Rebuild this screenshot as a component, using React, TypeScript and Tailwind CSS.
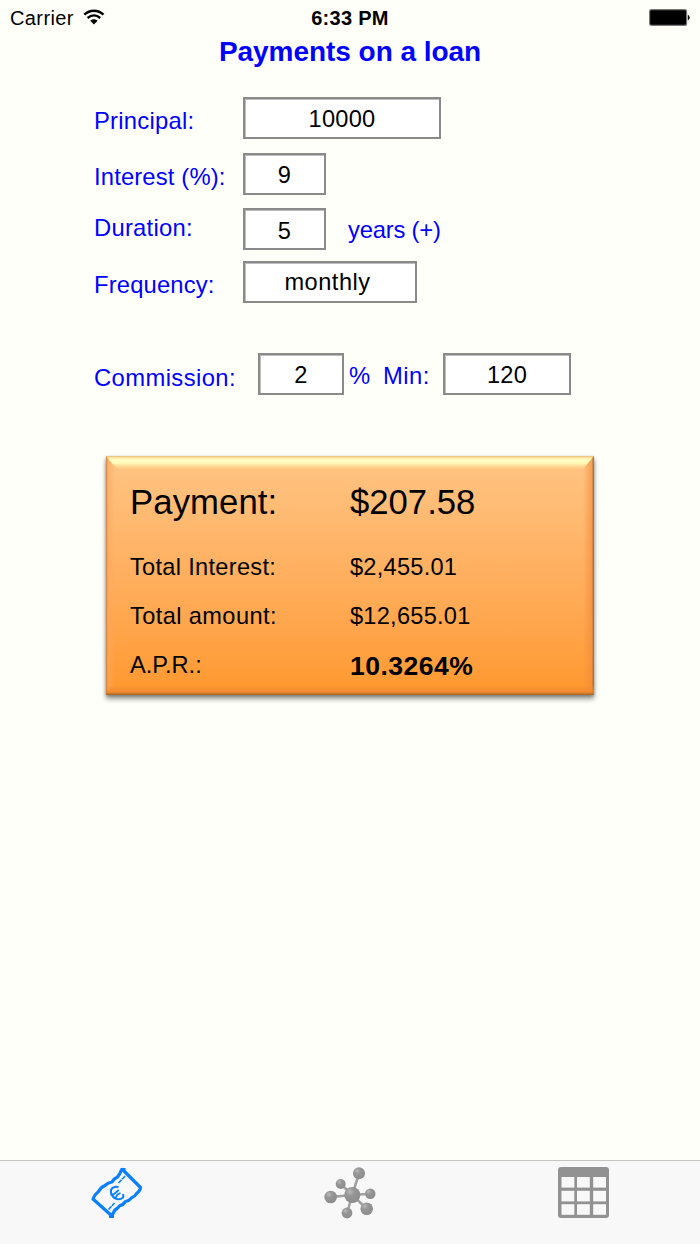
import { useState } from "react";
import clsx from "clsx";

type FieldProps = {
  label: string;
  value: string;
  onChange: (value: string) => void;
  className?: string;
};

function Field({ label, value, onChange, className }: FieldProps) {
  return (
    <input
      aria-label={label}
      value={value}
      onChange={(e) => onChange(e.target.value)}
      className={clsx(
        "block h-[42px] shrink-0 border-2 border-[#8a8a8a] bg-white text-center text-[23.6px] leading-[24px] text-black shadow-[inset_1px_1px_0_#bdbdbd] outline-none",
        className
      )}
    />
  );
}

function StatusBar() {
  return (
    <div className="grid h-[36px] grid-cols-3 items-center pr-[10px] pl-[10px] text-black">
      <div className="flex items-center gap-[9px]">
        <span className="text-[20px] leading-[36px] tracking-[0.4px]">Carrier</span>
        <svg width="22" height="16" viewBox="0 0 22 16" className="-mt-[2px]" fill="none" stroke="#000">
          <path d="M1.3 5.6 C6.8 0.4 15 0.4 20.5 5.6" strokeWidth="2.5" />
          <path d="M4.6 9 C8.4 5.6 13.4 5.6 17.2 9" strokeWidth="2.4" />
          <path d="M7.2 11.8 C9.4 9.8 12.4 9.8 14.6 11.8 L10.9 15.6 Z" fill="#000" stroke="none" />
        </svg>
      </div>
      <span className="text-center text-[20px] leading-[36px] font-bold tracking-[0.3px]">6:33 PM</span>
      <div className="flex items-center justify-end">
        <svg width="41" height="17" viewBox="0 0 41 17" className="-mt-[2px]">
          <rect x="0.6" y="0.6" width="37" height="15.8" rx="2" fill="#000" stroke="#777" strokeWidth="1.2" />
          <path d="M38.8 5.8 C41.3 6.8 41.3 10.2 38.8 11.2 Z" fill="#000" />
        </svg>
      </div>
    </div>
  );
}

function ResultCard() {
  return (
    <section className="relative mt-[61px] ml-[106px] h-[239px] w-[488px] bg-linear-to-b from-[#ffc584] to-[#ff982c] pt-[28px] pl-[24px] text-black shadow-[0_4px_5px_rgba(0,0,0,0.4),0_1px_3px_rgba(0,0,0,0.25)]">
      {/* bevelled edges */}
      <div className="absolute inset-y-0 left-0 w-[9px] bg-linear-to-r from-[#c77a3d] via-[#f9a862]/60 via-20% to-transparent" />
      <div className="absolute inset-y-0 right-0 w-[11px] bg-linear-to-l from-[#a8662f] via-[#f0893a]/60 via-22% to-transparent" />
      <div className="absolute inset-x-0 bottom-0 h-[10px] bg-linear-to-t from-[#a86224] via-[#ee8832]/80 via-30% to-transparent" />
      <div className="absolute inset-x-0 top-0 h-[13px] bg-[linear-gradient(to_bottom,#eab878_0,#ffeda6_2px,#ffffc4_4px,#fffbb8_7px,#ffdc98_10px,#ffc482_13px)] [clip-path:polygon(0_0,100%_0,calc(100%-11px)_100%,11px_100%)]" />

      <div className="relative flex text-[34.7px] leading-[36px]">
        <span className="w-[220px] tracking-[0.1px]">Payment:</span>
        <span>$207.58</span>
      </div>
      <div className="relative mt-[35px] flex text-[23.6px] leading-[24px] tracking-[0.25px]">
        <span className="w-[220px] tracking-[0.3px]">Total Interest:</span>
        <span>$2,455.01</span>
      </div>
      <div className="relative mt-[25px] flex text-[23.6px] leading-[24px] tracking-[0.25px]">
        <span className="w-[220px] tracking-[0.4px]">Total amount:</span>
        <span>$12,655.01</span>
      </div>
      <div className="relative mt-[25px] flex text-[23.6px] leading-[24px]">
        <span className="w-[220px]">A.P.R.:</span>
        <span className="text-[26.5px] leading-[26px] font-bold tracking-[0.5px]">10.3264%</span>
      </div>
    </section>
  );
}

function MoneyIcon() {
  return (
    <svg width="52" height="52" viewBox="0 0 52 52" fill="none" stroke="#0a7fff" strokeLinejoin="round">
      <path
        d="M31.5 2.5 L49.5 20.5 Q49 24 46 26 Q44 29.5 41 30.5 Q38 34 34.5 34.5 Q32 38 29 38.5 Q26 42 24 43 Q22 46 21 49 L2 32 Q4 27 7.5 24.5 Q10 20 14 18.5 Q17 15.5 21 15 Q23 11.5 26.5 10 Q29 7 30 4 Z"
        strokeWidth="3.2"
      />
      <path d="M29.5 3 h5 M18 49 h5" strokeWidth="4" />
      <path d="M27.5 16 l3 -3.2 M31 12.3 l3.2 -3.3 M17.5 42.5 l3 -3.2 M21 38.8 l2.5 -2.8" strokeWidth="1.6" />
      <path d="M27.5 20.3 C24 18.8 19 21 20 25.5 C21 31 27 34.5 32.2 30.5 V27" strokeWidth="2" />
      <path d="M19.5 27.3 L22.5 27.5 L27.8 23 M24.5 31 L26.5 27.5 L29.5 26" strokeWidth="1.7" />
    </svg>
  );
}

const nodes = [
  { x: 35, y: 7.3, r: 6 },
  { x: 16.7, y: 18, r: 5 },
  { x: 6.7, y: 31, r: 6.3 },
  { x: 46.3, y: 27.7, r: 5.2 },
  { x: 42.7, y: 42.7, r: 6.3 },
  { x: 23, y: 47, r: 5.4 },
];

function NetworkIcon() {
  return (
    <svg width="52" height="54" viewBox="0 0 52 54" className="-mt-[1px]">
      <defs>
        <radialGradient id="ball" cx="0.35" cy="0.3" r="0.7">
          <stop offset="0" stopColor="#b8b8b8" />
          <stop offset="0.4" stopColor="#959595" />
          <stop offset="1" stopColor="#8d8d8d" />
        </radialGradient>
      </defs>
      {nodes.map((n) => (
        <line key={n.x} x1="28.3" y1="29" x2={n.x} y2={n.y} stroke="#a0a0a0" strokeWidth="2.6" />
      ))}
      {nodes.map((n) => (
        <circle key={n.x} cx={n.x} cy={n.y} r={n.r} fill="url(#ball)" />
      ))}
      <circle cx="28.3" cy="29" r="8" fill="url(#ball)" />
    </svg>
  );
}

function TableIcon() {
  return (
    <svg width="51" height="51" viewBox="0 0 51 51">
      <rect width="51" height="51" rx="3" fill="#929292" />
      {[10, 23.8, 37.2].map((y) =>
        [3.5, 19, 35.2].map((x) => (
          <rect key={`${x}-${y}`} x={x} y={y} width="12.8" height="10.6" fill="#f8f8f8" />
        ))
      )}
    </svg>
  );
}

export default function App() {
  const [principal, setPrincipal] = useState("10000");
  const [interest, setInterest] = useState("9");
  const [duration, setDuration] = useState("5");
  const [frequency, setFrequency] = useState("monthly");
  const [commission, setCommission] = useState("2");
  const [minimum, setMinimum] = useState("120");

  return (
    <div className="flex h-[1244px] w-[700px] flex-col overflow-hidden bg-[#fffffa] font-['Liberation_Sans',Arial,sans-serif]">
      <StatusBar />
      <h1 className="h-[32px] text-center text-[28px] leading-[32px] font-bold tracking-[-0.05px] text-[#0000ff]">
        Payments on a loan
      </h1>

      <main className="flex-1">
        <div className="pt-[29px] pl-[94px] text-[23.8px] leading-[24px] tracking-[0.25px] text-[#0000ff]">
          <div className="flex h-[56px] items-start">
            <span className="w-[149px] pt-[12px]">Principal:</span>
            <Field label="Principal" value={principal} onChange={setPrincipal} className="w-[198px] pt-[2px]" />
          </div>
          <div className="flex h-[55px] items-start">
            <span className="w-[149px] pt-[12px] tracking-[0.15px]">Interest (%):</span>
            <Field label="Interest" value={interest} onChange={setInterest} className="w-[83px] pt-[2px]" />
          </div>
          <div className="flex h-[53px] items-start">
            <span className="w-[149px] pt-[8px]">Duration:</span>
            <Field label="Duration" value={duration} onChange={setDuration} className="w-[83px] pt-[4px]" />
            <span className="pt-[10px] pl-[22px] tracking-[-0.2px]">years (+)</span>
          </div>
          <div className="flex h-[92px] items-start">
            <span className="w-[149px] pt-[12px] tracking-[0.15px]">Frequency:</span>
            <Field label="Frequency" value={frequency} onChange={setFrequency} className="w-[174px] pr-[5px] tracking-[0.5px]" />
          </div>
          <div className="flex items-start">
            <span className="w-[164px] pt-[13px] tracking-[0.4px]">Commission:</span>
            <Field label="Commission" value={commission} onChange={setCommission} className="w-[86px] pt-[3px]" />
            <span className="w-[39px] pt-[11px] pl-[5px]">%</span>
            <span className="w-[60px] pt-[11px] tracking-[0.5px]">Min:</span>
            <Field label="Minimum commission" value={minimum} onChange={setMinimum} className="w-[128px] pt-[3px]" />
          </div>
        </div>

        <ResultCard />
      </main>

      <nav className="grid h-[84px] grid-cols-3 items-start justify-items-center border-t border-[#c4c4c0] bg-[#f8f8f8] pt-[6px]">
        <button aria-label="Loan">
          <MoneyIcon />
        </button>
        <button aria-label="Network">
          <NetworkIcon />
        </button>
        <button aria-label="Table">
          <TableIcon />
        </button>
      </nav>
    </div>
  );
}
